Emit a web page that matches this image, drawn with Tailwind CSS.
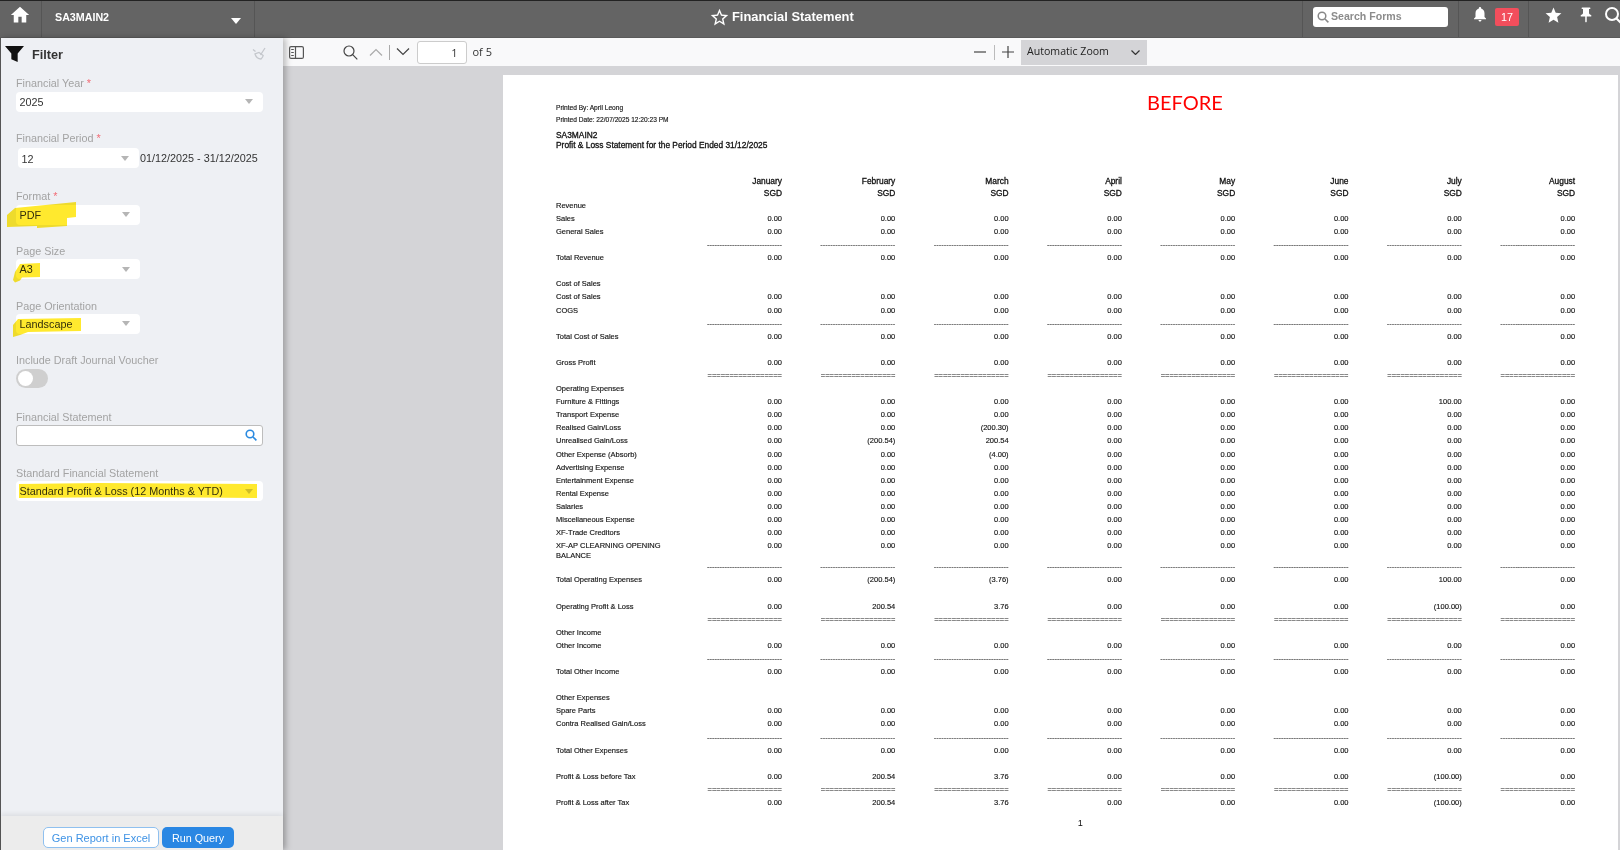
<!DOCTYPE html>
<html lang="en">
<head>
<meta charset="utf-8">
<title>Financial Statement</title>
<script src="https://cdn.jsdelivr.net/npm/@tailwindcss/browser@4"></script>
</head>
<body class="w-[1620px] h-[850px] overflow-hidden flex flex-col bg-[#d4d4d7] [font-family:'Liberation_Sans',Arial,sans-serif]">

<header class="h-[38px] shrink-0 flex items-stretch bg-[#646464] border-t border-t-[#222] border-b border-b-[#5a5a5a] text-white">
  <div class="w-[42px] shrink-0 border-r border-[#555] flex items-start justify-center pt-[4px] pr-[2px]">
    <svg class="w-[20px] h-[20px]" viewBox="0 0 24 24" fill="#fff"><path d="M10 21v-7h4v7h5.5v-9H23L12 2 1 12h3.5v9z"/></svg>
  </div>
  <div class="w-[213px] shrink-0 border-r border-[#555] relative flex items-start pl-[13px] pt-[10px]">
    <span class="text-[10.7px] leading-[12px] font-bold">SA3MAIN2</span>
    <svg class="absolute left-[189px] top-[17px] w-[10px] h-[6px]" viewBox="0 0 10 6" fill="#fff"><path d="M0 0h10L5 6z"/></svg>
  </div>
  <div class="flex items-start ml-[454px]">
    <svg class="w-[21px] h-[21px] mt-[5.5px]" viewBox="0 0 24 24" fill="#fff"><path d="M22 9.24l-7.19-.62L12 2 9.19 8.63 2 9.24l5.46 4.73L5.82 21 12 17.27 18.18 21l-1.63-7.03L22 9.24zM12 15.4l-3.76 2.27 1-4.28-3.32-2.88 4.38-.38L12 6.1l1.71 4.04 4.38.38-3.32 2.88 1 4.28L12 15.4z"/></svg>
    <span class="ml-[2px] mt-[7px] text-[12.9px] leading-[18px] font-bold">Financial Statement</span>
  </div>
  <div class="flex-1"></div>
  <div class="w-[156px] shrink-0 border-l border-[#555] pl-[10px] pt-[6px]">
    <div class="w-[135px] h-[20px] bg-white rounded-[3px] flex items-center pl-[4px]">
      <svg class="w-[12px] h-[12px]" viewBox="0 0 12 12" fill="none" stroke="#888" stroke-width="1.5"><circle cx="5" cy="5" r="3.8"/><path d="M8 8l3.4 3.4"/></svg>
      <span class="ml-[2px] text-[10.6px] font-bold text-[#8c8c8c]">Search Forms</span>
    </div>
  </div>
  <div class="w-[70px] shrink-0 border-l border-[#555] flex items-start pl-[12px] pt-[3px]">
    <svg class="w-[18px] h-[18px] mt-[1px]" viewBox="0 0 24 24" fill="#fff"><path d="M12 22c1.1 0 2-.9 2-2h-4c0 1.1.9 2 2 2zm6-6v-5c0-3.07-1.63-5.64-4.5-6.32V4c0-.83-.67-1.5-1.5-1.5s-1.5.67-1.5 1.5v.68C7.64 5.36 6 7.92 6 11v5l-2 2v1h16v-1l-2-2z"/></svg>
    <span class="ml-[6px] mt-[4px] w-[24px] h-[18px] bg-[#f24e5c] rounded-[2px] text-[10.8px] leading-[18px] text-center">17</span>
  </div>
  <div class="w-[92px] shrink-0 border-l border-[#555] flex items-start pl-[15px] pt-[5px] overflow-hidden">
    <svg class="w-[19px] h-[19px] shrink-0" viewBox="0 0 24 24" fill="#fff"><path d="M12 17.27L18.18 21l-1.64-7.03L22 9.24l-7.19-.61L12 2 9.19 8.63 2 9.24l5.46 4.73L5.82 21z"/></svg>
    <svg class="w-[18px] h-[18px] shrink-0 ml-[14px]" viewBox="0 0 24 24" fill="#fff"><path d="M16 9V4h1c.55 0 1-.45 1-1s-.45-1-1-1H7c-.55 0-1 .45-1 1s.45 1 1 1h1v5c0 1.66-1.34 3-3 3v2h5.97v7l1 1 1-1v-7H19v-2c-1.66 0-3-1.34-3-3z"/></svg>
    <svg class="w-[18px] h-[18px] shrink-0 ml-[9px]" viewBox="0 0 18 18" fill="none" stroke="#fff" stroke-width="2"><circle cx="8" cy="8" r="6"/><path d="M12.5 12.5l4.5 4.5"/></svg>
  </div>
</header>

<main class="flex-1 flex min-h-0">
  <aside class="relative z-10 w-[283px] shrink-0 bg-[#eef0f4] border-l border-[#555] flex flex-col shadow-[3px_0_6px_rgba(0,0,0,0.25)] text-[10.8px] leading-[12px] text-[#333]">
    <div class="h-[39.3px] shrink-0 relative flex items-center pl-[31px] pb-[6px]">
      <svg class="absolute left-[4px] top-[8px] w-[19px] h-[16px]" viewBox="0 0 18 15" fill="#111"><path d="M0 0h18l-6 7v8l-6-2.5V7z"/></svg>
      <span class="text-[12.7px] font-bold text-[#333]">Filter</span>
      <svg class="absolute left-[251px] top-[9px] w-[14px] h-[14px]" viewBox="0 0 14 14" fill="none" stroke="#c4c7cc" stroke-width="1.3"><path d="M1 2.5l2.5 2M13 1L8.5 8M3 7c1 3 3 5 6 5 1-1 2-2 2.2-3.5L7 5.5z"/></svg>
    </div>

    <div class="pl-[15px]">
      <div class="text-[#a3a3a3]">Financial Year <span class="text-[#f26b75]">*</span></div>
      <div class="mt-[2.7px] w-[247px] h-[19.7px] bg-white rounded-[4px] flex items-center justify-between pl-[3.6px] pr-[10px]"><span>2025</span><svg class="w-[8px] h-[5px]" viewBox="0 0 8 5" fill="#b5b5b5"><path d="M0 0h8L4 5z"/></svg></div>

      <div class="mt-[20.3px] text-[#a3a3a3]">Financial Period <span class="text-[#f26b75]">*</span></div>
      <div class="mt-[4.3px] flex items-center">
        <div class="ml-[1.5px] w-[121px] h-[20px] bg-white rounded-[4px] flex items-center justify-between pl-[3.9px] pr-[10px]"><span class="mt-[1.5px]">12</span><svg class="w-[8px] h-[5px]" viewBox="0 0 8 5" fill="#b5b5b5"><path d="M0 0h8L4 5z"/></svg></div>
        <span class="ml-[1.5px]">01/12/2025 - 31/12/2025</span>
      </div>

      <div class="mt-[21.7px] text-[#a3a3a3]">Format <span class="text-[#f26b75]">*</span></div>
      <div class="mt-[2.7px] w-[124px] h-[20px] bg-white rounded-[4px] flex items-center justify-between pl-[3.6px] pr-[10px]"><span>PDF</span><svg class="w-[8px] h-[5px]" viewBox="0 0 8 5" fill="#b5b5b5"><path d="M0 0h8L4 5z"/></svg></div>

      <div class="mt-[20.3px] text-[#a3a3a3]">Page Size</div>
      <div class="mt-[2.3px] w-[124px] h-[19.7px] bg-white rounded-[4px] flex items-center justify-between pl-[3.6px] pr-[10px]"><span>A3</span><svg class="w-[8px] h-[5px]" viewBox="0 0 8 5" fill="#b5b5b5"><path d="M0 0h8L4 5z"/></svg></div>

      <div class="mt-[21px] text-[#a3a3a3]">Page Orientation</div>
      <div class="mt-[2px] w-[124px] h-[20px] bg-white rounded-[4px] flex items-center justify-between pl-[3.6px] pr-[10px]"><span>Landscape</span><svg class="w-[8px] h-[5px]" viewBox="0 0 8 5" fill="#b5b5b5"><path d="M0 0h8L4 5z"/></svg></div>

      <div class="mt-[20px] text-[#a3a3a3]">Include Draft Journal Voucher</div>
      <div class="mt-[3px] w-[32px] h-[19px] bg-[#cfcfcf] rounded-full flex items-center pl-[2px]"><span class="w-[14.5px] h-[14.5px] bg-white rounded-full"></span></div>

      <div class="mt-[22.6px] text-[#a3a3a3]">Financial Statement</div>
      <div class="mt-[2.4px] w-[247px] h-[21px] bg-white rounded-[3px] border border-[#bdbdbd] flex items-center justify-end pr-[5px]">
        <svg class="w-[12px] h-[12px]" viewBox="0 0 12 12" fill="none" stroke="#2a8ae0" stroke-width="1.6"><circle cx="5" cy="5" r="3.8"/><path d="M8 8l3.4 3.4"/></svg>
      </div>

      <div class="mt-[21px] text-[#a3a3a3]">Standard Financial Statement</div>
      <div class="mt-[2.3px] w-[247px] h-[19.7px] bg-white rounded-[4px] flex items-center justify-between pl-[3.6px] pr-[10px]"><span>Standard Profit &amp; Loss (12 Months &amp; YTD)</span><svg class="w-[8px] h-[5px]" viewBox="0 0 8 5" fill="#cfcfcf"><path d="M0 0h8L4 5z"/></svg></div>
    </div>

    <div class="mt-auto h-[33.7px] shrink-0 bg-[#ececec] shadow-[0_-2px_5px_rgba(0,0,0,0.08)] flex items-start pl-[42px] pt-[11px] gap-[3px]">
      <button class="w-[116px] h-[21px] bg-white border border-[#8fc0ef] rounded-[5px] text-[11px] text-[#3f93e5]">Gen Report in Excel</button>
      <button class="w-[72px] h-[21px] bg-[#2a87e3] rounded-[5px] text-[10.8px] text-white">Run Query</button>
    </div>
  </aside>

  <section class="flex-1 min-w-0 flex flex-col">
    <div class="h-[28px] shrink-0 bg-[#f9f9fa] flex items-center pl-[6px] text-[#333] [font-family:'Open_Sans',sans-serif] text-[11px]">
      <svg class="w-[15px] h-[13px] shrink-0" viewBox="0 0 15 13" fill="none" stroke="#555" stroke-width="1.2"><rect x="0.6" y="0.6" width="13.8" height="11.8" rx="1.5"/><path d="M6.5 0.6v11.8"/><path d="M2.2 3.5h2.6M2.2 6.5h2.6M2.2 9.5h2.6"/></svg>
      <svg class="w-[15px] h-[15px] shrink-0 ml-[39px]" viewBox="0 0 15 15" fill="none" stroke="#444" stroke-width="1.2"><circle cx="6" cy="6" r="5"/><path d="M9.7 9.7l4.6 4.6"/></svg>
      <svg class="w-[14px] h-[8px] shrink-0 ml-[11px]" viewBox="0 0 14 8" fill="none" stroke="#aaa" stroke-width="1.2"><path d="M1 7.5l6-6 6 6"/></svg>
      <span class="w-[1px] h-[15px] shrink-0 ml-[6px] bg-[#aaa]"></span>
      <svg class="w-[14px] h-[8px] shrink-0 ml-[6px]" viewBox="0 0 14 8" fill="none" stroke="#444" stroke-width="1.2"><path d="M1 .5l6 6 6-6"/></svg>
      <div class="w-[49.5px] h-[23px] shrink-0 ml-[7px] bg-white border border-[#ccc] rounded-[3px] text-right pr-[8px] leading-[21px]">1</div>
      <span class="w-[30px] shrink-0 ml-[6px]">of 5</span>
      <svg class="w-[12px] h-[12px] shrink-0 ml-[471.5px]" viewBox="0 0 12 12" stroke="#444" stroke-width="1.2"><path d="M0 6h12"/></svg>
      <span class="w-[1px] h-[15px] shrink-0 ml-[8px] bg-[#bbb]"></span>
      <svg class="w-[12px] h-[12px] shrink-0 ml-[7px]" viewBox="0 0 12 12" stroke="#444" stroke-width="1.2"><path d="M0 6h12M6 0v12"/></svg>
      <div class="w-[126px] h-[25px] shrink-0 ml-[7px] bg-[#d4d4d7] flex items-center justify-between pl-[6px] pr-[7px]">
        <span class="text-[#222] text-[10.6px]">Automatic Zoom</span>
        <svg class="w-[9px] h-[5px]" viewBox="0 0 9 5" fill="none" stroke="#333" stroke-width="1.2"><path d="M.5.5l4 4 4-4"/></svg>
      </div>
    </div>

    <div class="flex-1 min-h-0 overflow-hidden pt-[8.7px] pl-[220px] pr-[2px]">
      <div class="relative h-[900px] bg-white pl-[53px] pt-[27.4px] text-[#111] text-[7.5px] leading-[10px] [-webkit-text-stroke:0.15px_#222] blur-[0.25px]">
        <div class="absolute left-[644px] top-[14px] text-[20px] leading-[26px] text-[#f00] [font-family:Lato,sans-serif] [-webkit-text-stroke:0]">BEFORE</div>

        <div class="text-[6.6px] leading-[11.7px]">Printed By: April Leong</div>
        <div class="text-[6.6px] leading-[11.7px]">Printed Date: 22/07/2025 12:20:23 PM</div>
        <div class="mt-[4.45px] text-[8.4px] [-webkit-text-stroke:0.3px_#111]">SA3MAIN2</div>
        <div class="text-[8.4px] [-webkit-text-stroke:0.3px_#111]">Profit &amp; Loss Statement for the Period Ended 31/12/2025</div>

        <div class="mt-[25.1px] mb-[-0.6px] grid grid-cols-[151px_75px_repeat(7,113.3px)] text-[8.4px] leading-[12.4px] text-right [-webkit-text-stroke:0.3px_#111]">
          <i></i><span>January<br>SGD</span><span>February<br>SGD</span><span>March<br>SGD</span><span>April<br>SGD</span><span>May<br>SGD</span><span>June<br>SGD</span><span>July<br>SGD</span><span>August<br>SGD</span>
        </div>

        <div class="[&>div]:grid [&>div]:grid-cols-[151px_75px_repeat(7,113.3px)] [&>div]:h-[13.1px] [&>div]:items-center [&>div>span]:text-right [&>div>span]:whitespace-nowrap">
          <div><p>Revenue</p></div>
          <div><p>Sales</p><span>0.00</span><span>0.00</span><span>0.00</span><span>0.00</span><span>0.00</span><span>0.00</span><span>0.00</span><span>0.00</span></div>
          <div><p>General Sales</p><span>0.00</span><span>0.00</span><span>0.00</span><span>0.00</span><span>0.00</span><span>0.00</span><span>0.00</span><span>0.00</span></div>
          <div><p></p><span>------------------------------</span><span>------------------------------</span><span>------------------------------</span><span>------------------------------</span><span>------------------------------</span><span>------------------------------</span><span>------------------------------</span><span>------------------------------</span></div>
          <div><p>Total Revenue</p><span>0.00</span><span>0.00</span><span>0.00</span><span>0.00</span><span>0.00</span><span>0.00</span><span>0.00</span><span>0.00</span></div>
          <div></div>
          <div><p>Cost of Sales</p></div>
          <div><p>Cost of Sales</p><span>0.00</span><span>0.00</span><span>0.00</span><span>0.00</span><span>0.00</span><span>0.00</span><span>0.00</span><span>0.00</span></div>
          <div><p>COGS</p><span>0.00</span><span>0.00</span><span>0.00</span><span>0.00</span><span>0.00</span><span>0.00</span><span>0.00</span><span>0.00</span></div>
          <div><p></p><span>------------------------------</span><span>------------------------------</span><span>------------------------------</span><span>------------------------------</span><span>------------------------------</span><span>------------------------------</span><span>------------------------------</span><span>------------------------------</span></div>
          <div><p>Total Cost of Sales</p><span>0.00</span><span>0.00</span><span>0.00</span><span>0.00</span><span>0.00</span><span>0.00</span><span>0.00</span><span>0.00</span></div>
          <div></div>
          <div><p>Gross Profit</p><span>0.00</span><span>0.00</span><span>0.00</span><span>0.00</span><span>0.00</span><span>0.00</span><span>0.00</span><span>0.00</span></div>
          <div><p></p><span>=================</span><span>=================</span><span>=================</span><span>=================</span><span>=================</span><span>=================</span><span>=================</span><span>=================</span></div>
          <div><p>Operating Expenses</p></div>
          <div><p>Furniture &amp; Fittings</p><span>0.00</span><span>0.00</span><span>0.00</span><span>0.00</span><span>0.00</span><span>0.00</span><span>100.00</span><span>0.00</span></div>
          <div><p>Transport Expense</p><span>0.00</span><span>0.00</span><span>0.00</span><span>0.00</span><span>0.00</span><span>0.00</span><span>0.00</span><span>0.00</span></div>
          <div><p>Realised Gain/Loss</p><span>0.00</span><span>0.00</span><span>(200.30)</span><span>0.00</span><span>0.00</span><span>0.00</span><span>0.00</span><span>0.00</span></div>
          <div><p>Unrealised Gain/Loss</p><span>0.00</span><span>(200.54)</span><span>200.54</span><span>0.00</span><span>0.00</span><span>0.00</span><span>0.00</span><span>0.00</span></div>
          <div><p>Other Expense (Absorb)</p><span>0.00</span><span>0.00</span><span>(4.00)</span><span>0.00</span><span>0.00</span><span>0.00</span><span>0.00</span><span>0.00</span></div>
          <div><p>Advertising Expense</p><span>0.00</span><span>0.00</span><span>0.00</span><span>0.00</span><span>0.00</span><span>0.00</span><span>0.00</span><span>0.00</span></div>
          <div><p>Entertainment Expense</p><span>0.00</span><span>0.00</span><span>0.00</span><span>0.00</span><span>0.00</span><span>0.00</span><span>0.00</span><span>0.00</span></div>
          <div><p>Rental Expense</p><span>0.00</span><span>0.00</span><span>0.00</span><span>0.00</span><span>0.00</span><span>0.00</span><span>0.00</span><span>0.00</span></div>
          <div><p>Salaries</p><span>0.00</span><span>0.00</span><span>0.00</span><span>0.00</span><span>0.00</span><span>0.00</span><span>0.00</span><span>0.00</span></div>
          <div><p>Miscellaneous Expense</p><span>0.00</span><span>0.00</span><span>0.00</span><span>0.00</span><span>0.00</span><span>0.00</span><span>0.00</span><span>0.00</span></div>
          <div><p>XF-Trade Creditors</p><span>0.00</span><span>0.00</span><span>0.00</span><span>0.00</span><span>0.00</span><span>0.00</span><span>0.00</span><span>0.00</span></div>
          <div class="h-[21.1px]! items-start! pt-[1.5px]"><p>XF-AP CLEARNING OPENING<br>BALANCE</p><span>0.00</span><span>0.00</span><span>0.00</span><span>0.00</span><span>0.00</span><span>0.00</span><span>0.00</span><span>0.00</span></div>
          <div><p></p><span>------------------------------</span><span>------------------------------</span><span>------------------------------</span><span>------------------------------</span><span>------------------------------</span><span>------------------------------</span><span>------------------------------</span><span>------------------------------</span></div>
          <div><p>Total Operating Expenses</p><span>0.00</span><span>(200.54)</span><span>(3.76)</span><span>0.00</span><span>0.00</span><span>0.00</span><span>100.00</span><span>0.00</span></div>
          <div></div>
          <div><p>Operating Profit &amp; Loss</p><span>0.00</span><span>200.54</span><span>3.76</span><span>0.00</span><span>0.00</span><span>0.00</span><span>(100.00)</span><span>0.00</span></div>
          <div><p></p><span>=================</span><span>=================</span><span>=================</span><span>=================</span><span>=================</span><span>=================</span><span>=================</span><span>=================</span></div>
          <div><p>Other Income</p></div>
          <div><p>Other Income</p><span>0.00</span><span>0.00</span><span>0.00</span><span>0.00</span><span>0.00</span><span>0.00</span><span>0.00</span><span>0.00</span></div>
          <div><p></p><span>------------------------------</span><span>------------------------------</span><span>------------------------------</span><span>------------------------------</span><span>------------------------------</span><span>------------------------------</span><span>------------------------------</span><span>------------------------------</span></div>
          <div><p>Total Other Income</p><span>0.00</span><span>0.00</span><span>0.00</span><span>0.00</span><span>0.00</span><span>0.00</span><span>0.00</span><span>0.00</span></div>
          <div></div>
          <div><p>Other Expenses</p></div>
          <div><p>Spare Parts</p><span>0.00</span><span>0.00</span><span>0.00</span><span>0.00</span><span>0.00</span><span>0.00</span><span>0.00</span><span>0.00</span></div>
          <div><p>Contra Realised Gain/Loss</p><span>0.00</span><span>0.00</span><span>0.00</span><span>0.00</span><span>0.00</span><span>0.00</span><span>0.00</span><span>0.00</span></div>
          <div><p></p><span>------------------------------</span><span>------------------------------</span><span>------------------------------</span><span>------------------------------</span><span>------------------------------</span><span>------------------------------</span><span>------------------------------</span><span>------------------------------</span></div>
          <div><p>Total Other Expenses</p><span>0.00</span><span>0.00</span><span>0.00</span><span>0.00</span><span>0.00</span><span>0.00</span><span>0.00</span><span>0.00</span></div>
          <div></div>
          <div><p>Profit &amp; Loss before Tax</p><span>0.00</span><span>200.54</span><span>3.76</span><span>0.00</span><span>0.00</span><span>0.00</span><span>(100.00)</span><span>0.00</span></div>
          <div><p></p><span>=================</span><span>=================</span><span>=================</span><span>=================</span><span>=================</span><span>=================</span><span>=================</span><span>=================</span></div>
          <div><p>Profit &amp; Loss after Tax</p><span>0.00</span><span>200.54</span><span>3.76</span><span>0.00</span><span>0.00</span><span>0.00</span><span>(100.00)</span><span>0.00</span></div>
        </div>
        <div class="mt-[8px] pl-[522px] text-[8.4px]">1</div>
      </div>
    </div>
  </section>
</main>

<svg class="absolute left-0 top-0 z-20 w-[300px] h-[520px] pointer-events-none mix-blend-multiply" viewBox="0 0 300 520" fill="#ffe92e">
  <path d="M7 215l8-7 61-6v15l-9 1v8l-30 2v-2l-30 1z"/>
  <path d="M13 280l2-8 5-8 20-1v14l-18 .5-2 3-5 2z"/>
  <path d="M13 337v-12l5-6 63-1v13l-53 1-8 3z"/>
  <path d="M19 484l80-1 158 1v14l-120-1-118 1z"/>
</svg>
</body>
</html>
